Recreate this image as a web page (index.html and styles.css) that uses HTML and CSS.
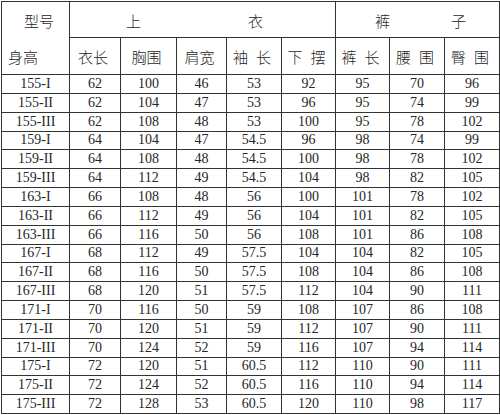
FILE: index.html
```html
<!DOCTYPE html>
<html lang="zh">
<head>
<meta charset="utf-8">
<title>尺码表</title>
<link rel="stylesheet" href="styles.css">
</head>
<body>
<div class="sheet">
  <div class="corner">
    <div class="corner-top">型号</div>
    <div class="corner-bottom">身高</div>
  </div>
  <div class="group group-top"><span>上</span><span>衣</span></div>
  <div class="group group-pants"><span>裤</span><span>子</span></div>

  <div class="hd"><span>衣长</span></div>
  <div class="hd"><span>胸围</span></div>
  <div class="hd"><span>肩宽</span></div>
  <div class="hd spaced"><span>袖</span><span>长</span></div>
  <div class="hd spaced"><span>下</span><span>摆</span></div>
  <div class="hd spaced"><span>裤</span><span>长</span></div>
  <div class="hd spaced"><span>腰</span><span>围</span></div>
  <div class="hd spaced"><span>臀</span><span>围</span></div>

  <div class="c">155-I</div><div class="c">62</div><div class="c">100</div><div class="c">46</div><div class="c">53</div><div class="c">92</div><div class="c">95</div><div class="c">70</div><div class="c">96</div>
  <div class="c">155-II</div><div class="c">62</div><div class="c">104</div><div class="c">47</div><div class="c">53</div><div class="c">96</div><div class="c">95</div><div class="c">74</div><div class="c">99</div>
  <div class="c">155-III</div><div class="c">62</div><div class="c">108</div><div class="c">48</div><div class="c">53</div><div class="c">100</div><div class="c">95</div><div class="c">78</div><div class="c">102</div>
  <div class="c">159-I</div><div class="c">64</div><div class="c">104</div><div class="c">47</div><div class="c">54.5</div><div class="c">96</div><div class="c">98</div><div class="c">74</div><div class="c">99</div>
  <div class="c">159-II</div><div class="c">64</div><div class="c">108</div><div class="c">48</div><div class="c">54.5</div><div class="c">100</div><div class="c">98</div><div class="c">78</div><div class="c">102</div>
  <div class="c">159-III</div><div class="c">64</div><div class="c">112</div><div class="c">49</div><div class="c">54.5</div><div class="c">104</div><div class="c">98</div><div class="c">82</div><div class="c">105</div>
  <div class="c">163-I</div><div class="c">66</div><div class="c">108</div><div class="c">48</div><div class="c">56</div><div class="c">100</div><div class="c">101</div><div class="c">78</div><div class="c">102</div>
  <div class="c">163-II</div><div class="c">66</div><div class="c">112</div><div class="c">49</div><div class="c">56</div><div class="c">104</div><div class="c">101</div><div class="c">82</div><div class="c">105</div>
  <div class="c">163-III</div><div class="c">66</div><div class="c">116</div><div class="c">50</div><div class="c">56</div><div class="c">108</div><div class="c">101</div><div class="c">86</div><div class="c">108</div>
  <div class="c">167-I</div><div class="c">68</div><div class="c">112</div><div class="c">49</div><div class="c">57.5</div><div class="c">104</div><div class="c">104</div><div class="c">82</div><div class="c">105</div>
  <div class="c">167-II</div><div class="c">68</div><div class="c">116</div><div class="c">50</div><div class="c">57.5</div><div class="c">108</div><div class="c">104</div><div class="c">86</div><div class="c">108</div>
  <div class="c">167-III</div><div class="c">68</div><div class="c">120</div><div class="c">51</div><div class="c">57.5</div><div class="c">112</div><div class="c">104</div><div class="c">90</div><div class="c">111</div>
  <div class="c">171-I</div><div class="c">70</div><div class="c">116</div><div class="c">50</div><div class="c">59</div><div class="c">108</div><div class="c">107</div><div class="c">86</div><div class="c">108</div>
  <div class="c">171-II</div><div class="c">70</div><div class="c">120</div><div class="c">51</div><div class="c">59</div><div class="c">112</div><div class="c">107</div><div class="c">90</div><div class="c">111</div>
  <div class="c">171-III</div><div class="c">70</div><div class="c">124</div><div class="c">52</div><div class="c">59</div><div class="c">116</div><div class="c">107</div><div class="c">94</div><div class="c">114</div>
  <div class="c">175-I</div><div class="c">72</div><div class="c">120</div><div class="c">51</div><div class="c">60.5</div><div class="c">112</div><div class="c">110</div><div class="c">90</div><div class="c">111</div>
  <div class="c">175-II</div><div class="c">72</div><div class="c">124</div><div class="c">52</div><div class="c">60.5</div><div class="c">116</div><div class="c">110</div><div class="c">94</div><div class="c">114</div>
  <div class="c">175-III</div><div class="c">72</div><div class="c">128</div><div class="c">53</div><div class="c">60.5</div><div class="c">120</div><div class="c">110</div><div class="c">98</div><div class="c">117</div>
</div>
</body>
</html>
```

FILE: styles.css
```css
html, body {
  margin: 0;
  padding: 0;
  background: #ffffff;
}

body {
  padding: 1px 0 0 1px;
}

.sheet {
  display: grid;
  grid-template-columns: 67px 50px 55px 49px 54px 53px 53px 54px 54px;
  grid-template-rows: 35px 36px repeat(18, 1fr);
  gap: 1px;
  padding: 1px;
  width: 497px;
  height: 411px;
  background: #333333;
  font-family: "Liberation Serif", "Noto Sans CJK SC", serif;
  color: #262626;
}

.sheet > div {
  background: #ffffff;
}

.corner {
  grid-row: 1 / 3;
  grid-column: 1;
  display: grid;
  grid-template-rows: 36px 36px;
  font-family: "Noto Sans CJK SC", sans-serif;
  font-weight: 300;
  font-size: 15px;
  line-height: 1;
}

.corner-top {
  align-self: center;
  justify-self: end;
  margin-right: 15px;
}

.corner-bottom {
  align-self: center;
  justify-self: start;
  margin-left: 6px;
}

.group {
  display: flex;
  align-items: center;
  font-family: "Noto Sans CJK SC", sans-serif;
  font-weight: 300;
  font-size: 15px;
  line-height: 1;
  padding-top: 2px;
}

.group-top {
  grid-column: 2 / 7;
  padding-left: 56px;
  gap: 107px;
}

.group-pants {
  grid-column: 7 / 10;
  padding-left: 39px;
  gap: 61px;
}

.hd {
  display: flex;
  align-items: center;
  justify-content: center;
  font-family: "Noto Sans CJK SC", sans-serif;
  font-weight: 300;
  font-size: 15px;
  line-height: 1;
  padding-top: 1px;
  padding-right: 4px;
}

.hd.spaced {
  gap: 8px;
}

.c {
  display: flex;
  align-items: center;
  justify-content: center;
  font-size: 14px;
  line-height: 1;
}
```
